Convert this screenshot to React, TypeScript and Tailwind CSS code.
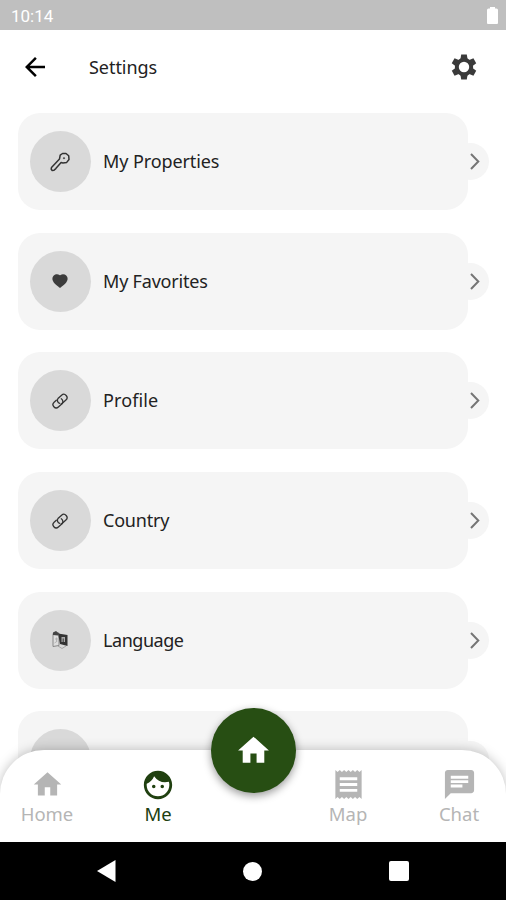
import type { ReactNode } from 'react';
import { AiFillHeart } from 'react-icons/ai';
import { MdArrowBack, MdChat, MdFace, MdHome, MdReceipt } from 'react-icons/md';

interface SettingsItem {
    label: string;
    icon: ReactNode;
    labelClass: string;
}

function GearIcon() {
    return (
        <svg viewBox="-13 -13 26 26" className="size-[26px] ml-auto text-[#3a3a3a]" fill="currentColor">
            <circle r="7.2" fill="none" stroke="currentColor" strokeWidth="4" />
            {[0, 60, 120, 180, 240, 300].map((angle) => (
                <path key={angle} d="M-3.600-7.500-2.800-12.500h5.600L3.600-7.500 2-6.500h-4z" transform={`rotate(${angle})`} />
            ))}
        </svg>
    );
}

function KeyIcon() {
    return (
        <svg viewBox="0 0 20 20" className="size-5" fill="none" stroke="currentColor" strokeWidth="1.500">
            <path
                d="M10.200 3.200 12.500 1.500h3.500l2.700 2.300.3 3.700-2.300 2.900-3.800.5-1.800-.3-5.300 6-1.800 1.700-1.800.2-1-1.300.3-1.800 8-8.500z"
                strokeLinejoin="round"
            />
            <circle cx="14" cy="6.200" r=".7" fill="currentColor" strokeWidth=".5" />
        </svg>
    );
}

function ChainIcon() {
    return (
        <svg viewBox="0 0 16 16" className="size-4" fill="none" stroke="currentColor" strokeWidth="1.300" strokeLinecap="round">
            <path d="M9.500 11 13.900 7A3.200 3.200 0 0 0 9.600 2.200L6 5.500A3.200 3.200 0 0 0 7.800 10.400" />
            <path d="M4.300 7.200 2.100 9.200A3.200 3.200 0 0 0 6.400 14L10 10.700A3.200 3.200 0 0 0 9.300 5.800" />
        </svg>
    );
}

function TranslateIcon() {
    return (
        <svg viewBox="0 0 18 20" className="w-[18px] h-5" fill="none">
            <path d="M2 3.500 8 3v12.500l-6 1z" stroke="#888" strokeWidth="1" fill="#dedede" />
            <path d="M7 3.500 16.500 5v11L9 14z" fill="#333" />
            <path d="M2 2.500 5 1l3 2.500-1 2-5-.5z" fill="#444" />
            <path d="M10.500 7h3.500v5h-3.500z" fill="#aaa" />
            <path d="M12.200 12V8.500" stroke="#333" />
            <path d="M4 9h3M5.500 7.500v4M3.500 13l3-2" stroke="#aaa" strokeWidth=".8" />
            <path d="m7 16 4 2.500 4-2.500" stroke="#999" strokeWidth=".8" />
        </svg>
    );
}

const items: SettingsItem[] = [
    { label: 'My Properties', icon: <KeyIcon />, labelClass: 'tracking-[-0.1px]' },
    { label: 'My Favorites', icon: <AiFillHeart className="size-[18px] text-[#3c3c3c]" />, labelClass: 'tracking-[-0.2px]' },
    { label: 'Profile', icon: <ChainIcon />, labelClass: 'tracking-[0.1px]' },
    { label: 'Country', icon: <ChainIcon />, labelClass: 'tracking-[-0.2px]' },
    { label: 'Language', icon: <TranslateIcon />, labelClass: 'tracking-[-0.45px]' },
    { label: 'Currency', icon: null, labelClass: '' },
];

function SettingsRow({ item }: { item: SettingsItem }) {
    return (
        <div className="flex items-center shrink-0">
            <div className="flex items-center w-[450px] h-[97px] pl-[11.5px] rounded-[22px] bg-[#f5f5f5]">
                <div className="flex items-center justify-center size-[61px] rounded-full bg-[#d9d9d9] text-[#333]">
                    {item.icon}
                </div>
                <span className={`ml-[12.5px] -mt-px text-[18px] leading-6 text-[#222] ${item.labelClass}`}>
                    {item.label}
                </span>
            </div>
            <div className="flex items-center justify-end -ml-[16px] size-[37px] pr-[9px] rounded-full bg-[#f5f5f5]">
                <svg viewBox="0 0 10 17" className="w-[10px] h-[17px]" fill="none">
                    <path d="m1 1 7.300 7.500L1 16" stroke="#757575" strokeWidth="2" />
                </svg>
            </div>
        </div>
    );
}

interface NavItemProps {
    label: string;
    icon: ReactNode;
    active?: boolean;
}

function NavItem({ label, icon, active }: NavItemProps) {
    return (
        <div
            className={`flex flex-col items-center w-[70px] pt-[17px] ${
                active ? 'text-[#204010]' : 'text-[#b5b5b5]'
            }`}
        >
            <div className="flex items-center justify-center h-[35px]">{icon}</div>
            <span className="text-[18.5px] leading-6">{label}</span>
        </div>
    );
}

export default function App() {
    return (
        <div className="relative flex flex-col w-[506px] h-[900px] overflow-hidden bg-white font-['Noto_Sans',sans-serif]">
            {/* Status bar */}
            <div className="flex items-center justify-between h-[30px] shrink-0 pl-[11px] pr-[8px] bg-[#bfbfbf] text-white">
                <span className="font-[Roboto,sans-serif] text-[17px] leading-none pt-[2px]">10:14</span>
                <svg viewBox="0 0 11 17" className="w-[11px] h-[17px]" fill="currentColor">
                    <path d="M3 0h5v1.500h1.500A1.500 1.500 0 0 1 11 3v13a1 1 0 0 1-1 1H1a1 1 0 0 1-1-1V3a1.500 1.500 0 0 1 1.500-1.500H3z" />
                </svg>
            </div>

            {/* Header */}
            <header className="flex items-center h-[74px] shrink-0 pl-5 pr-[29px]">
                <MdArrowBack className="size-[30px] text-black" />
                <h1 className="ml-[39px] text-[18px] leading-6 tracking-[-0.05px] text-[#222]">Settings</h1>
                <GearIcon />
            </header>

            {/* Settings list */}
            <main className="flex flex-col flex-1 min-h-0 gap-[22.7px] pt-[9px] pl-[18px] overflow-hidden">
                {items.map((item) => (
                    <SettingsRow key={item.label} item={item} />
                ))}
            </main>

            {/* Tab bar, floats over the list */}
            <nav className="absolute z-30 inset-x-0 bottom-[58px] flex justify-between h-[92px] px-3 rounded-t-[44px] bg-white shadow-[0_0_12px_rgba(0,0,0,0.25)]">
                <div className="flex justify-between w-[181px]">
                    <NavItem label="Home" icon={<MdHome className="size-[33px]" />} />
                    <NavItem label="Me" active icon={<MdFace className="size-[34px]" />} />
                </div>
                <div className="flex items-center justify-center size-[85px] -mt-[42px] rounded-full bg-[#274e13] text-white shadow-[0_3px_8px_rgba(0,0,0,0.4)]">
                    <MdHome className="size-[37px]" />
                </div>
                <div className="flex justify-between w-[181px]">
                    <NavItem label="Map" icon={<MdReceipt className="size-[35px]" />} />
                    <NavItem label="Chat" icon={<MdChat className="size-[35px]" />} />
                </div>
            </nav>

            {/* System buttons */}
            <div className="relative z-40 flex items-center justify-between h-[58px] shrink-0 pl-[97px] pr-[97px] bg-black text-white">
                <svg viewBox="0 0 19 22" className="w-[19px] h-[22px]" fill="currentColor">
                    <path d="M18.500 0v22L0 11z" />
                </svg>
                <div className="size-[19px] rounded-full bg-white" />
                <div className="size-5 rounded-[2px] bg-white" />
            </div>
        </div>
    );
}
